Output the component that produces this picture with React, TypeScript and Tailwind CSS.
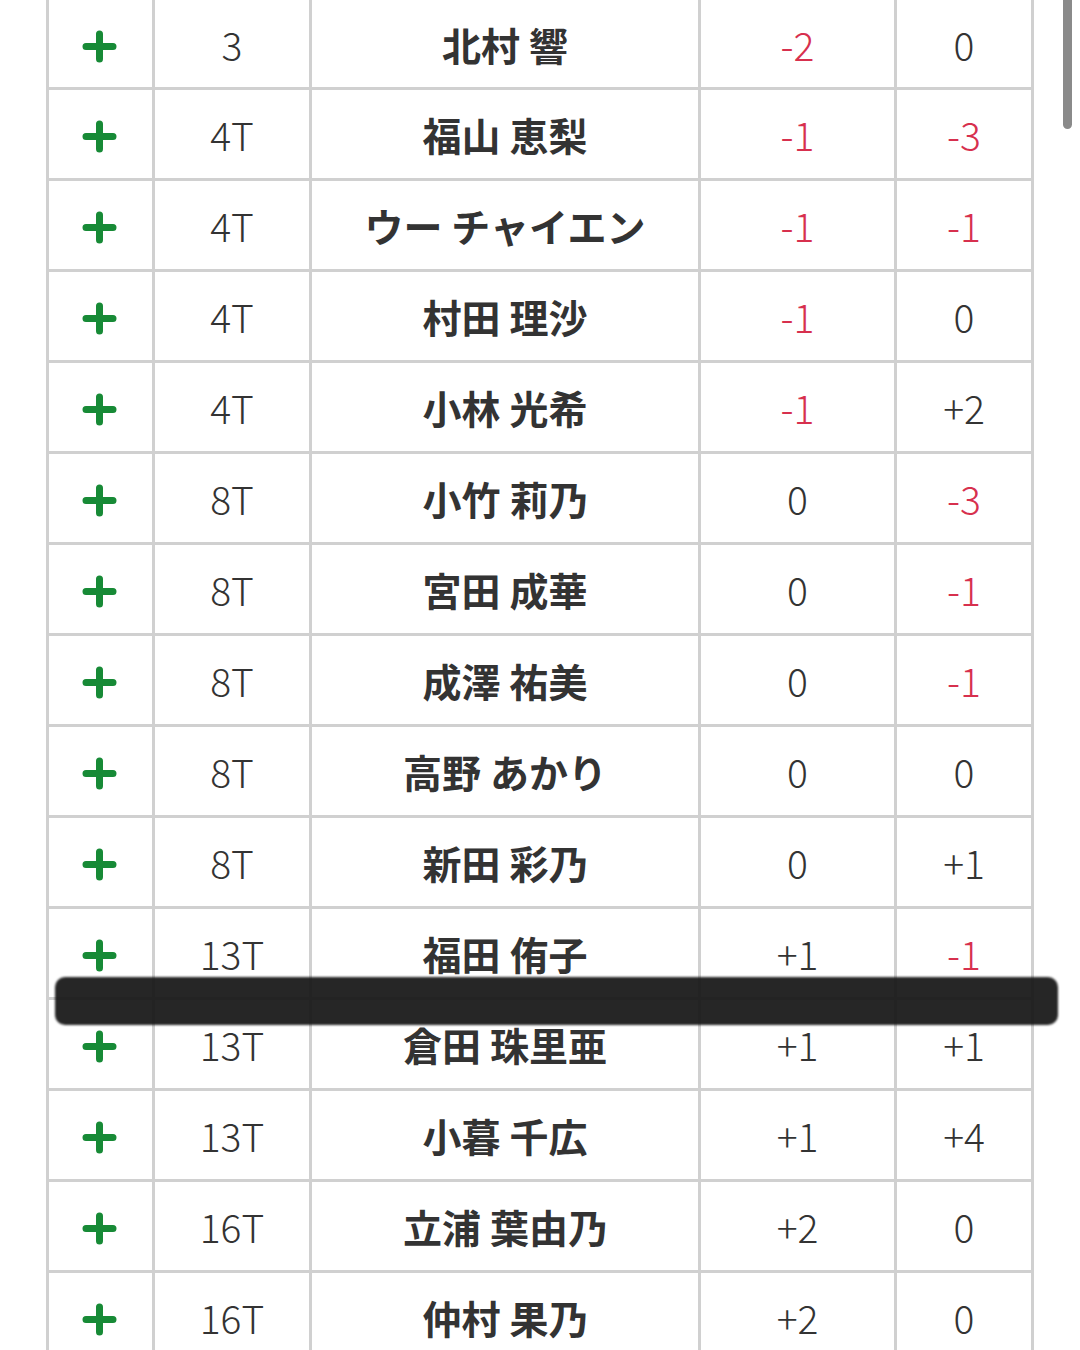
const rows = [
  ['3', '北村 響', '-2', '0'],
  ['4T', '福山 恵梨', '-1', '-3'],
  ['4T', 'ウー チャイエン', '-1', '-1'],
  ['4T', '村田 理沙', '-1', '0'],
  ['4T', '小林 光希', '-1', '+2'],
  ['8T', '小竹 莉乃', '0', '-3'],
  ['8T', '宮田 成華', '0', '-1'],
  ['8T', '成澤 祐美', '0', '-1'],
  ['8T', '高野 あかり', '0', '0'],
  ['8T', '新田 彩乃', '0', '+1'],
  ['13T', '福田 侑子', '+1', '-1'],
  ['13T', '倉田 珠里亜', '+1', '+1'],
  ['13T', '小暮 千広', '+1', '+4'],
  ['16T', '立浦 葉由乃', '+2', '0'],
  ['16T', '仲村 果乃', '+2', '0'],
]

function PlusIcon() {
  return (
    <svg width="35" height="33" viewBox="0 0 35 33" aria-hidden="true">
      <path
        d="M17.5 4V29M4 16.5H31"
        stroke="#178a36"
        strokeWidth="7"
        strokeLinecap="round"
        fill="none"
      />
    </svg>
  )
}

function Score({ value }: { value: string }) {
  const neg = value.startsWith('-')
  return <span className={neg ? 'text-[#d7304e]' : 'text-[#333]'}>{value}</span>
}

export default function App() {
  return (
    <main className="relative w-[1080px] h-[1350px] overflow-hidden bg-white pl-[46px] font-['Noto_Sans_CJK_JP',sans-serif] text-[39px] leading-none text-[#333]">
      {/* Leaderboard rows */}
      <div className="w-[988px]">
        {rows.map((r, i) => (
          <div
            key={`${i}-row`}
            className={`grid grid-cols-[106px_157px_389px_196px_137px] border-l-[3px] border-b-[3px] border-[#d0d0d0] font-light ${
              i === 0 ? 'h-[90px]' : 'h-[91px]'
            }`}
          >
            <div className="flex items-center justify-center border-r-[3px] border-[#d0d0d0] pr-[2px] pt-[5px]">
              <PlusIcon />
            </div>
            <div className="flex items-center justify-center border-r-[3px] border-[#d0d0d0] pt-[1px]">
              {r[0]}
            </div>
            <div className="flex items-center justify-center border-r-[3px] border-[#d0d0d0] pt-[1px] font-bold">
              {r[1]}
            </div>
            <div className="flex items-center justify-center border-r-[3px] border-[#d0d0d0] pt-[1px]">
              <Score value={r[2]} />
            </div>
            <div className="flex items-center justify-center border-r-[3px] border-[#d0d0d0] pt-[1px]">
              <Score value={r[3]} />
            </div>
          </div>
        ))}
      </div>

      {/* Marker strike over the cut line */}
      <div className="absolute left-[55px] top-[977px] w-[1003px] h-[48px] rounded-[10px] bg-[#141414]/92 blur-[1px]" />

      {/* Scrollbar thumb */}
      <div className="absolute left-[1063px] top-0 w-[9px] h-[129px] rounded-b-full bg-[#8a8a8a]" />
    </main>
  )
}
